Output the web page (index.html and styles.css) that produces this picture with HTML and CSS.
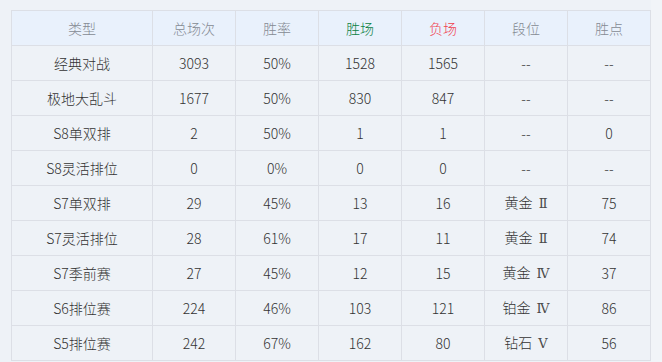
FILE: index.html
```html
<!DOCTYPE html>
<html lang="zh">
<head>
<meta charset="utf-8">
<link rel="stylesheet" href="styles.css">
</head>
<body>
<div class="page">
  <table class="stats">
    <colgroup>
      <col class="c-type">
      <col class="c-num"><col class="c-num"><col class="c-num"><col class="c-num"><col class="c-num"><col class="c-num">
    </colgroup>
    <thead>
      <tr>
        <th>类型</th><th>总场次</th><th>胜率</th><th class="win">胜场</th><th class="lose">负场</th><th>段位</th><th>胜点</th>
      </tr>
    </thead>
    <tbody>
      <tr><td>经典对战</td><td>3093</td><td>50%</td><td>1528</td><td>1565</td><td>--</td><td>--</td></tr>
      <tr><td>极地大乱斗</td><td>1677</td><td>50%</td><td>830</td><td>847</td><td>--</td><td>--</td></tr>
      <tr><td>S8单双排</td><td>2</td><td>50%</td><td>1</td><td>1</td><td>--</td><td>0</td></tr>
      <tr><td>S8灵活排位</td><td>0</td><td>0%</td><td>0</td><td>0</td><td>--</td><td>--</td></tr>
      <tr><td>S7单双排</td><td>29</td><td>45%</td><td>13</td><td>16</td><td>黄金 <span class="roman">Ⅱ</span></td><td>75</td></tr>
      <tr><td>S7灵活排位</td><td>28</td><td>61%</td><td>17</td><td>11</td><td>黄金 <span class="roman">Ⅱ</span></td><td>74</td></tr>
      <tr><td>S7季前赛</td><td>27</td><td>45%</td><td>12</td><td>15</td><td>黄金 <span class="roman">Ⅳ</span></td><td>37</td></tr>
      <tr><td>S6排位赛</td><td>224</td><td>46%</td><td>103</td><td>121</td><td>铂金 <span class="roman">Ⅳ</span></td><td>86</td></tr>
      <tr><td>S5排位赛</td><td>242</td><td>67%</td><td>162</td><td>80</td><td>钻石 <span class="roman">Ⅴ</span></td><td>56</td></tr>
    </tbody>
  </table>
  <div class="scroll-track"></div>
</div>
</body>
</html>
```

FILE: styles.css
```css
html, body {
  margin: 0;
  padding: 0;
  background: #eef2f7;
}

.page {
  display: flex;
  align-items: flex-start;
  padding: 10px 0 0 11px;
  height: 352px;
  overflow: hidden;
}

.stats {
  border-collapse: collapse;
  table-layout: fixed;
  width: 640px;
  flex: none;
  font-family: "Noto Sans CJK SC", "Noto Sans", sans-serif;
  font-size: 14px;
  font-weight: 300;
  color: #333333;
}

.c-type { width: 141px; }
.c-num { width: 83px; }

.stats th,
.stats td {
  border: 1px solid #dcdfe6;
  height: 34px;
  padding: 0;
  text-align: center;
  vertical-align: middle;
  font-weight: 300;
  line-height: 20px;
}

.stats th {
  background: #e9f1fc;
  color: #858a93;
}

.stats th.win { color: #0b8043; }
.stats th.lose { color: #f0414f; }

.stats td {
  background: #eef2f7;
}

.roman {
  font-family: "DejaVu Serif", "Liberation Serif", serif;
  font-size: 13px;
  font-weight: normal;
  color: #4a4a4a;
  margin-left: 3px;
}

.scroll-track {
  flex: 1;
  align-self: stretch;
  margin-top: -10px;
  background: #f1f4f8;
}
```
